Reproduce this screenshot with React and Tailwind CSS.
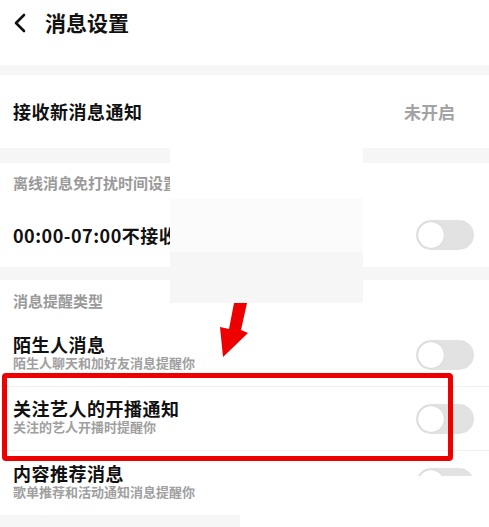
import React from "react";

function Toggle() {
  return (
    <div className="flex items-center w-[58px] h-[30px] rounded-full bg-[#e2e2e2] px-[2px]">
      <div className="w-[26px] h-[26px] rounded-full bg-white shadow-[0_0_1px_rgba(0,0,0,0.25)]" />
    </div>
  );
}

function SectionTitle({ children, h }) {
  return (
    <div className={`flex items-center pl-[13px] text-[15px] text-[#9a9a9a] font-bold ${h}`}>{children}</div>
  );
}

export default function App() {
  const tipos = [
    { titulo: "陌生人消息", sub: "陌生人聊天和加好友消息提醒你" },
    { titulo: "关注艺人的开播通知", sub: "关注的艺人开播时提醒你" },
    { titulo: "内容推荐消息", sub: "歌单推荐和活动通知消息提醒你" },
  ];

  return (
    <div className="relative w-[489px] h-[527px] overflow-hidden bg-white text-[#111] font-['Noto_Sans_CJK_SC',sans-serif]">
      {/* Header */}
      <header className="flex items-start h-[65px] pl-[12px] pt-[10px]">
        <svg className="mt-[3px]" width="16" height="20" viewBox="0 0 16 20" fill="none">
          <path d="M12 2 L4 10 L12 18" stroke="#111" strokeWidth="2.6" strokeLinecap="round" strokeLinejoin="round" />
        </svg>
        <h1 className="ml-[17px] text-[21px] font-bold leading-[24px]">消息设置</h1>
      </header>
      <div className="h-[10px] bg-[#f6f6f6]" />

      {/* 接收新消息通知 */}
      <div className="flex items-center justify-between h-[73px] pl-[13px] pr-[34px]">
        <span className="text-[18px] font-bold tracking-[0.5px]">接收新消息通知</span>
        <span className="text-[17px] font-bold text-[#a3a3a3]">未开启</span>
      </div>
      <div className="h-[15px] bg-[#f6f6f6]" />

      {/* 免打扰 */}
      <SectionTitle h="h-[40px]">离线消息免打扰时间设置</SectionTitle>
      <div className="flex items-center justify-between h-[64px] pl-[13px] pr-[15px]">
        <span className="text-[18px] font-bold tracking-[0.5px]">00:00-07:00不接收离线消息</span>
        <Toggle />
      </div>
      <div className="h-[13px] bg-[#f6f6f6]" />

      {/* 消息提醒类型 */}
      <SectionTitle h="h-[43px]">消息提醒类型</SectionTitle>
      {tipos.map((t, i) => (
        <div
          key={t.titulo}
          className={`flex items-center justify-between h-[64px] pl-[13px] pr-[15px] ${i < 2 ? "border-b border-[#f0f0f0]" : ""}`}
        >
          <div className="flex flex-col pb-[4px]">
            <span className="text-[18px] font-bold leading-[18px] tracking-[0.5px]">{t.titulo}</span>
            <span className="mt-[3px] text-[13px] font-bold leading-[14px] text-[#a0a0a0]">{t.sub}</span>
          </div>
          <Toggle />
        </div>
      ))}
      <div className="w-[240px] h-[12px] bg-[#f6f6f6]" />

      {/* Overlay blanco del montaje */}
      <div className="absolute left-[170px] top-[147px] w-[193px] flex flex-col">
        <div className="h-[51px] bg-white" />
        <div className="h-[54px] bg-[#fbfbfb]" />
        <div className="h-[51px] bg-[#f6f6f6]" />
      </div>
      <div className="absolute left-[390px] top-[476px] w-[99px] h-[51px] bg-white" />

      {/* Flecha roja */}
      <svg className="absolute left-[215px] top-[300px]" width="40" height="60" viewBox="0 0 40 60">
        <polygon points="19,3 32,3 26,30 33,33 8,57 5,27 14,29" fill="#ee0000" />
      </svg>

      {/* Recuadro rojo */}
      <div className="absolute left-[2px] top-[373px] w-[451px] h-[88px] border-[5px] border-[#ee0000] rounded-[4px]" />
    </div>
  );
}
